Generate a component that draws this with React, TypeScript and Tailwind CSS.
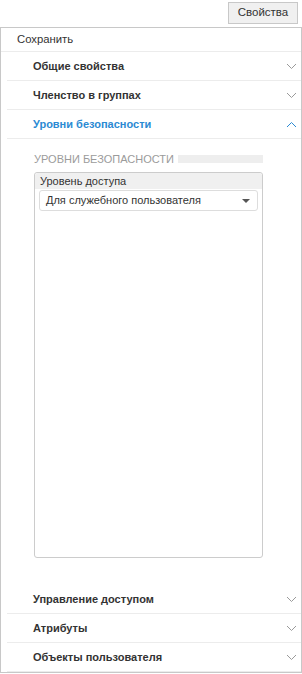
import { ReactNode } from 'react';

function Chevron({ up, blue }: { up?: boolean; blue?: boolean }) {
  return (
    <svg width="11" height="7" viewBox="0 0 11 7" className="mr-[4px]">
      <path
        d={up ? 'M1 6 L5.5 1.5 L10 6' : 'M1 1 L5.5 5.5 L10 1'}
        fill="none"
        stroke={blue ? '#2b8ad3' : '#9a9a9a'}
        strokeWidth="1"
      />
    </svg>
  );
}

function SectionRow({ label, open }: { label: string; open?: boolean }) {
  return (
    <div className="ml-[6px] h-[29px] flex items-center justify-between pl-[26px] border-b border-[#ececec]">
      <span className={`text-[11px] font-bold ${open ? 'text-[#2b8ad3]' : 'text-[#333]'}`}>{label}</span>
      <Chevron up={open} blue={open} />
    </div>
  );
}

function Panel({ children }: { children: ReactNode }) {
  return <div className="border-x border-b border-[#c8c8c8]">{children}</div>;
}

export default function App() {
  return (
    <div className="w-[302px] h-[674px] bg-white font-['Liberation_Sans',Arial,sans-serif] text-[#333]">
      {/* toolbar */}
      <div className="h-[28px] flex items-start justify-end pt-[2px] pr-[4px] border-b border-[#c8c8c8]">
        <button className="h-[22px] w-[70px] text-[11.5px] text-[#333] bg-[#f0f0f0] border border-[#c8c8c8]">
          Свойства
        </button>
      </div>

      <Panel>
        <div className="h-[24px] flex items-center pl-[16px] text-[11.3px] border-b border-[#ececec]">Сохранить</div>

        <SectionRow label="Общие свойства" />
        <SectionRow label="Членство в группах" />
        <SectionRow label="Уровни безопасности" open />

        <div className="h-[446px] pl-[33px] pr-[38px] pt-[13px]">
          <div className="flex items-center gap-[4px] h-[14px]">
            <span className="text-[11px] text-[#9b9b9b] leading-none">УРОВНИ БЕЗОПАСНОСТИ</span>
            <div className="flex-1 h-[8px] bg-[#eeeeee]" />
          </div>

          <div className="mt-[6px] h-[386px] border border-[#cccccc] rounded-[3px] flex flex-col">
            <div className="h-[16px] bg-[#f0f0f0] pl-[5px] text-[11px] leading-[16px] rounded-t-[3px]">Уровень доступа</div>
            <div className="mx-[4px] mt-[1px] h-[21px] border border-[#dddddd] rounded-[3px] flex items-center justify-between pl-[6px] pr-[7px]">
              <span className="text-[11px]">Для служебного пользователя</span>
              <svg width="8" height="4" viewBox="0 0 8 4">
                <path d="M0 0 L8 0 L4 4 Z" fill="#555" />
              </svg>
            </div>
          </div>
        </div>

        <SectionRow label="Управление доступом" />
        <SectionRow label="Атрибуты" />
        <SectionRow label="Объекты пользователя" />
      </Panel>
    </div>
  );
}
